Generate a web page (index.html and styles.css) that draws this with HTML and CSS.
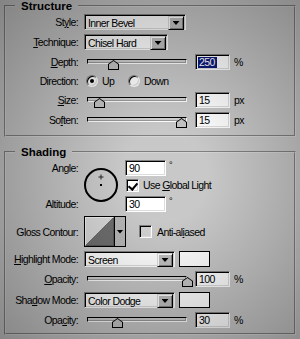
FILE: index.html
```html
<!DOCTYPE html>
<html lang="en">
<head>
	<meta charset="UTF-8">
	<title>Bevel and Emboss</title>
	<link rel="stylesheet" href="styles.css">
</head>
<body>
	<fieldset class="group">
		<legend>Structure</legend>
		<div class="row row--first">
			<span class="row-label">St<u>y</u>le:</span>
			<div class="select select--style"><span class="select-value">Inner Bevel</span><span class="select-btn"></span></div>
		</div>
		<div class="row">
			<span class="row-label"><u>T</u>echnique:</span>
			<div class="select select--technique"><span class="select-value">Chisel Hard</span><span class="select-btn"></span></div>
		</div>
		<div class="row">
			<span class="row-label"><u>D</u>epth:</span>
			<div class="slider"><div class="slider-track"></div><span class="slider-thumb" style="left: 21px"></span></div>
			<span class="field"><span class="field-sel">250</span></span>
			<span class="unit">%</span>
		</div>
		<div class="row row--tight">
			<span class="row-label">Direction:</span>
			<span class="radio-option radio-option--first"><span class="radio radio--on"></span>Up</span>
			<span class="radio-option"><span class="radio"></span>Down</span>
		</div>
		<div class="row row--tight">
			<span class="row-label"><u>S</u>ize:</span>
			<div class="slider"><div class="slider-track"></div><span class="slider-thumb" style="left: 7px"></span></div>
			<span class="field">15</span>
			<span class="unit">px</span>
		</div>
		<div class="row">
			<span class="row-label">So<u>f</u>ten:</span>
			<div class="slider"><div class="slider-track"></div><span class="slider-thumb" style="left: 89px"></span></div>
			<span class="field">15</span>
			<span class="unit">px</span>
		</div>
	</fieldset>

	<fieldset class="group group--shading">
		<legend>Shading</legend>
		<div class="angle">
			<div class="angle-labels"><span>Angle:</span><span>Altitude:</span></div>
			<svg class="angle-dial" width="34" height="34" viewBox="0 0 34 34">
				<circle cx="17" cy="17" r="16" fill="none" stroke="#000" stroke-width="2"/>
				<path d="M17 6.5v5M14.5 9h5" stroke="#222" stroke-width="1"/>
				<rect x="16" y="16" width="2" height="2" fill="#000"/>
			</svg>
			<div class="angle-fields">
				<div class="angle-line"><span class="field field--angle">90</span><span class="deg">°</span></div>
				<div class="angle-line angle-line--check"><span class="check check--on"></span><span class="check-text">Use <u>G</u>lobal Light</span></div>
				<div class="angle-line angle-line--alt"><span class="field field--angle">30</span><span class="deg">°</span></div>
			</div>
		</div>
		<div class="row row--contour">
			<span class="row-label">Gloss Contour:</span>
			<div class="contour"><span class="contour-preview"></span><span class="contour-btn"></span></div>
			<span class="check check--contour"></span><span class="check-text check-text--wide">Anti-al<u>i</u>ased</span>
		</div>
		<div class="row">
			<span class="row-label"><u>H</u>ighlight Mode:</span>
			<div class="select select--mode"><span class="select-value">Screen</span><span class="select-btn"></span></div>
			<span class="swatch"></span>
		</div>
		<div class="row">
			<span class="row-label"><u>O</u>pacity:</span>
			<div class="slider"><div class="slider-track"></div><span class="slider-thumb" style="left: 95px"></span></div>
			<span class="field">100</span>
			<span class="unit">%</span>
		</div>
		<div class="row row--shadow">
			<span class="row-label">Sha<u>d</u>ow Mode:</span>
			<div class="select select--mode"><span class="select-value">Color Dodge</span><span class="select-btn"></span></div>
			<span class="swatch"></span>
		</div>
		<div class="row">
			<span class="row-label">Opa<u>c</u>ity:</span>
			<div class="slider"><div class="slider-track"></div><span class="slider-thumb" style="left: 25px"></span></div>
			<span class="field">30</span>
			<span class="unit">%</span>
		</div>
	</fieldset>
</body>
</html>
```

FILE: styles.css
```css
* {
	box-sizing: border-box;
}

html {
	margin: 0;
	height: 339px;
	overflow: hidden;
}

body {
	position: relative;
	width: 300px;
	height: 339px;
	margin: 0;
	padding: 0;
	background: #c8c8c8;
	color: #000;
	font: 10.5px/14px "Liberation Sans", sans-serif;
	letter-spacing: -0.6px;
}

/* vignette over the whole dialog */
body::after {
	content: "";
	position: absolute;
	inset: 0;
	pointer-events: none;
	background: radial-gradient(ellipse farthest-corner at 55% 52%, rgba(0, 0, 0, 0) 18%, rgba(0, 0, 0, 0.34) 100%);
}

u {
	text-decoration-thickness: 1px;
	text-underline-offset: 1px;
}

.group {
	min-width: 0;
	margin: 0 4px;
	padding: 0 0 7px;
	border: 2px groove #d4d4d4;
}

.group--shading {
	margin-top: 9px;
	padding-bottom: 5px;
}

.group legend {
	margin-left: 9px;
	padding: 0 6px;
	font: bold 11.5px/12px "Liberation Sans", sans-serif;
	letter-spacing: 0;
}

.row {
	display: flex;
	align-items: center;
	height: 16px;
	margin-top: 4px;
	white-space: nowrap;
}

.row--first {
	margin-top: 2px;
}
.row--tight {
	margin-top: 3px;
}
.row--shadow {
	margin-top: 5px;
}

.row-label {
	flex: none;
	width: 72px;
	margin-right: 6px;
	text-align: right;
}

/* dropdowns */
.select {
	display: flex;
	height: 16px;
	padding: 1px;
	background: #fff;
	border: 1px solid;
	border-color: #808080 #fff #fff #808080;
	box-shadow: inset 1px 1px #000, inset -1px -1px #dcdcdc;
}
.select--style {
	width: 102px;
}
.select--technique {
	width: 84px;
}
.select--mode {
	width: 91px;
}

.select-value {
	flex: 1;
	padding-left: 2px;
	line-height: 14px;
}

.select-btn {
	display: flex;
	align-items: center;
	justify-content: center;
	width: 16px;
	height: 14px;
	background: #c0c0c0;
	border: 1px solid;
	border-color: #dcdcdc #000 #000 #dcdcdc;
	box-shadow: inset 1px 1px #fff, inset -1px -1px #808080;
}
.select-btn::after,
.contour-btn::after {
	content: "";
	width: 7px;
	height: 4px;
	background: #000;
	clip-path: polygon(0 0, 100% 0, 50% 100%);
}

/* sliders */
.slider {
	position: relative;
	flex: none;
	width: 100px;
	height: 16px;
	margin-left: 3px;
}

.slider-track {
	height: 5px;
	margin-top: 5px;
	background: #cfcfcf;
	border: 1px solid;
	border-color: #000 #fff #fff #000;
	box-shadow: inset -1px -1px #9a9a9a;
}

.slider-thumb {
	position: absolute;
	top: 6px;
	width: 11px;
	height: 10px;
	background: #000;
	clip-path: polygon(0 40%, 50% 0, 100% 40%, 100% 100%, 0 100%);
}
.slider-thumb::after {
	content: "";
	position: absolute;
	inset: 1px;
	background: #c4c4c4;
	clip-path: polygon(0 40%, 50% 0, 100% 40%, 100% 100%, 0 100%);
}

/* text fields */
.field {
	flex: none;
	width: 35px;
	height: 16px;
	margin-left: 8px;
	padding-left: 3px;
	line-height: 14px;
	background: #fff;
	border: 1px solid;
	border-color: #808080 #fff #fff #808080;
	box-shadow: inset 1px 1px #000, inset -1px -1px #dcdcdc;
}

.field-sel {
	display: inline-block;
	padding: 0 2px 0 1px;
	margin-left: -1px;
	line-height: 11px;
	background: #0b1a7c;
	color: #fff;
}

.unit {
	margin-left: 4px;
}

/* radios */
.radio-option {
	display: flex;
	align-items: center;
	gap: 4px;
	width: 42px;
}
.radio-option--first {
	margin-left: 2px;
}

.radio {
	position: relative;
	width: 12px;
	height: 12px;
	background: #fff;
	border-radius: 50%;
	border: 1px solid;
	border-color: #808080 #fff #fff #808080;
	box-shadow: inset 1px 1px #000, inset -1px -1px #dcdcdc;
}
.radio--on::after {
	content: "";
	position: absolute;
	top: 3px;
	left: 3px;
	width: 4px;
	height: 4px;
	border-radius: 50%;
	background: #000;
}

/* checkboxes */
.check {
	position: relative;
	flex: none;
	width: 13px;
	height: 13px;
	background: #fff;
	border: 1px solid;
	border-color: #808080 #fff #fff #808080;
	box-shadow: inset 1px 1px #000, inset -1px -1px #dcdcdc;
}
.check--on::after {
	content: "";
	position: absolute;
	left: 2px;
	top: 1px;
	width: 4px;
	height: 7px;
	border: solid #000;
	border-width: 0 2px 2px 0;
	transform: translate(1px, 0) rotate(40deg);
}
.check--contour {
	margin-left: 13px;
	background: #d2d2d2;
}

.check-text {
	margin-left: 4px;
}
.check-text--wide {
	margin-left: 5px;
}

/* angle block */
.angle {
	display: flex;
	height: 52px;
	margin-top: 2px;
	white-space: nowrap;
}

.angle-labels {
	display: flex;
	flex-direction: column;
	justify-content: space-between;
	width: 72px;
	margin-right: 6px;
	text-align: right;
	line-height: 16px;
}

.angle-dial {
	flex: none;
	margin-top: 8px;
}

.angle-fields {
	margin-left: 7px;
}

.angle-line {
	display: flex;
	align-items: center;
	height: 16px;
}
.angle-line--check {
	height: 14px;
	margin-top: 2px;
	margin-left: 1px;
}
.angle-line--alt {
	margin-top: 4px;
}

.field--angle {
	width: 41px;
	margin-left: 0;
}

.deg {
	align-self: flex-start;
	margin-left: 3px;
	font-size: 9px;
	line-height: 10px;
}

/* gloss contour */
.row--contour {
	height: 31px;
}

.contour {
	display: flex;
	width: 42px;
	height: 31px;
	border: 1px solid #000;
	background: #000;
}

.contour-preview {
	width: 29px;
	border: 1px solid;
	border-color: #eee #555 #555 #eee;
	background: linear-gradient(to bottom right, #d6d6d6 50%, #6e6e6e 50%);
}

.contour-btn {
	display: flex;
	align-items: center;
	justify-content: center;
	flex: 1;
	margin-left: 1px;
	background: #b6b6b6;
}

.swatch {
	width: 31px;
	height: 16px;
	margin-left: 4px;
	background: #fff;
	border: 1px solid #000;
}
```
